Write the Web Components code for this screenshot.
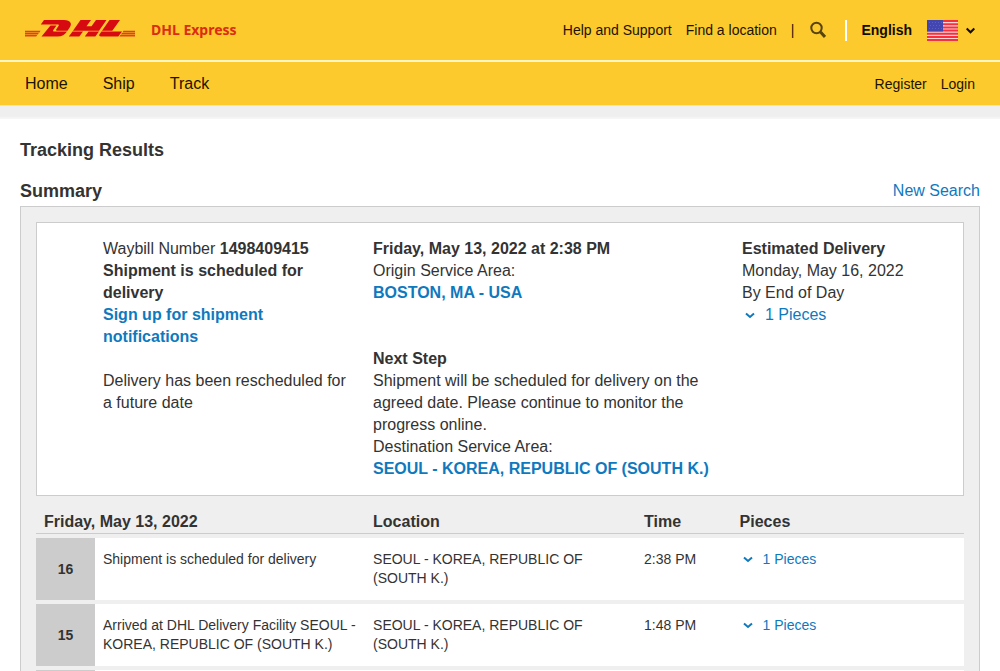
<!DOCTYPE html>
<html lang="en">
<head>
<meta charset="utf-8">
<meta name="viewport" content="width=device-width, initial-scale=1">
<title>Tracking Results</title>
<style>
  body { margin: 0; background: #fff; color: #333; font: 16px/22px "Liberation Sans", Arial, sans-serif; }
</style>
</head>
<body>
<site-header></site-header>
<tracking-page>
  <shipment-summary slot="summary"></shipment-summary>
  <event-table slot="events"></event-table>
</tracking-page>

<template id="site-header">
  <style>
    :host { display: block; color: #1c1300; }
    a { color: inherit; text-decoration: none; }
    header, nav { display: flex; align-items: center; background: #fdca2e; padding: 0 25px; }
    header { height: 60px; border-bottom: 2px solid #fff6c4; font-size: 14px; }
    nav { height: 43px; gap: 35px; }
    .brand { display: flex; align-items: center; gap: 16px; color: #dc2c12; margin-right: auto; font: 700 14px/20px "Noto Sans", sans-serif; }
    .brand svg, .search svg { display: block; }
    .tools { display: flex; align-items: center; gap: 14px; }
    .search { border: 0; padding: 0; margin-left: 2px; background: none; color: #56430d; }
    .rule { width: 2px; height: 21px; background: #fff; margin: 0 0 0 5px; }
    .language { display: flex; align-items: center; border: 0; padding: 0; background: none; color: #120c00; font: 700 14px/20px "Liberation Sans", Arial, sans-serif; }
    .flag { margin: 0 8px 0 15px; }
    .account { display: flex; gap: 14px; margin-left: auto; font-size: 14px; }
    .shade { height: 13px; background: linear-gradient(#efefef 10px, #f8f8f8); border-top: 1px solid #f4e4b0; }
  </style>
  <header>
    <a class="brand" href="#">
      <svg width="110" height="22" viewBox="0 0 110 22" fill="#d80a11" role="img" aria-label="DHL">
        <path fill="#e0431a" d="M0 11.800h15.500l-1 1.600H0zM0 14h13.800l-1 1.500H0zM0 16.100h12.200l-1 1.500H0zM98.500 11.800H110v1.600H97.400zM97 14h13v1.500H95.900zM95.400 16.100H110v1.500H94.300z"/>
        <path d="M19 1H39C46 1 47 5 45 8L42.500 11.800H32.500C31 11.800 30.800 11 31.300 10.200L33.500 7C34 6.200 33.800 5.500 33 5.500H15.800z"/>
        <path d="M25.500 6.500H31.500L28.300 11C27.600 12 28.300 12.500 29.800 12.500H42C40 15.500 37 17.600 32.500 17.600H16.500z"/>
        <path d="M55.500 1H66L61.500 7.300H66.500L71 1H81.500L74 11.800H48zM47.500 12.500H58L54.300 17.600H43.800zM63.500 12.500H74L70.300 17.600H59.800z"/>
        <path d="M84.500 1H95L87.300 11.800H77zM76.500 12.500H97L93.300 17.600H77C73.500 17.600 74 15.800 75 14.500z"/>
      </svg>
      <span>DHL Express</span>
    </a>
    <div class="tools">
      <a href="#">Help and Support</a>
      <a href="#">Find a location</a>
      <span>|</span>
      <button class="search" aria-label="Search">
        <svg width="16" height="18" viewBox="0 0 16 18" fill="none" stroke="currentColor"><circle cx="6.500" cy="7" r="5.200" stroke-width="2"/><path d="M10.500 11L15 16" stroke-width="3"/></svg>
      </button>
      <span class="rule"></span>
      <button class="language">English
        <svg class="flag" width="31" height="21" viewBox="0 0 31 21" role="img" aria-label="United States">
          <path fill="#fbd3d3" d="M0 0h31v21H0z"/>
          <path stroke="#f72f3f" stroke-width="2" d="M0 1h31M0 4.200h31M0 7.400h31M0 10.600h31M0 13.800h31M0 17h31M0 20h31"/>
          <path fill="#4346b0" d="M0 0h16v11.500H0z"/>
          <path stroke="#5c5ec0" stroke-dasharray="1 2" d="M2 2.500h13M3 5.500h12M2 8.500h13"/>
        </svg>
        <svg width="9" height="7" viewBox="0 0 9 7" fill="none" stroke="currentColor" stroke-width="2"><path d="M.7 1.500L4.500 5.300L8.300 1.500"/></svg>
      </button>
    </div>
  </header>
  <nav>
    <a href="#">Home</a><a href="#">Ship</a><a href="#">Track</a>
    <div class="account"><a href="#">Register</a><a href="#">Login</a></div>
  </nav>
  <div class="shade"></div>
</template>

<template id="tracking-page">
  <style>
    :host { display: block; padding: 20px 20px 0; }
    h1, h2 { margin: 0; font-size: 18px; line-height: 22px; }
    .heading { display: flex; justify-content: space-between; align-items: center; margin: 19px 0 4px; }
    a { color: #0f79be; text-decoration: none; }
    .panel { border: 1px solid #ccc; background: #efefef; padding: 15px; }
  </style>
  <h1>Tracking Results</h1>
  <div class="heading"><h2>Summary</h2><a href="#">New Search</a></div>
  <section class="panel"><slot name="summary"></slot><slot name="events"></slot></section>
</template>

<template id="pieces-toggle">
  <style>
    :host { display: block; }
    button { display: flex; align-items: center; gap: 10px; border: 0; padding: 0 0 0 3px; background: none; color: #0f79be; font: inherit; }
  </style>
  <button><svg width="10" height="7" viewBox="0 0 10 7" fill="none" stroke="currentColor" stroke-width="2"><path d="M1 1.500L5 5L9 1.500"/></svg><span><slot></slot></span></button>
</template>

<template id="shipment-summary">
  <style>
    :host { display: grid; grid-template-columns: 270fr 369fr 221fr; background: #fff; border: 1px solid #ccc; padding: 15px 0 15px 66px; }
    p { margin: 0; }
    .waybill { padding-right: 14px; }
    .note { margin-top: 22px; }
    .next { margin-top: 44px; padding-right: 20px; }
    a { color: #0f79be; text-decoration: none; font-weight: 700; }
  </style>
  <div class="waybill">
    <p>Waybill Number <b>1498409415</b></p>
    <p><b>Shipment is scheduled for delivery</b></p>
    <p><a href="#">Sign up for shipment notifications</a></p>
    <p class="note">Delivery has been rescheduled for a future date</p>
  </div>
  <div>
    <p><b>Friday, May 13, 2022 at 2:38 PM</b></p>
    <p>Origin Service Area:</p>
    <p><a href="#">BOSTON, MA - USA</a></p>
    <div class="next">
      <p><b>Next Step</b></p>
      <p>Shipment will be scheduled for delivery on the agreed date. Please continue to monitor the progress online.</p>
      <p>Destination Service Area:</p>
      <p><a href="#">SEOUL - KOREA, REPUBLIC OF (SOUTH K.)</a></p>
    </div>
  </div>
  <div>
    <p><b>Estimated Delivery</b></p>
    <p>Monday, May 16, 2022</p>
    <p>By End of Day</p>
    <pieces-toggle>1 Pieces</pieces-toggle>
  </div>
</template>

<template id="event-table">
  <style>
    :host { display: block; }
    table { width: 100%; table-layout: fixed; border-spacing: 0; font-size: 14px; line-height: 19px; }
    .number { width: 59px; }
    .event { width: 29.1%; }
    .place { width: 29.2%; }
    .time { width: 10.3%; }
    th, td { padding: 12px 8px; text-align: left; vertical-align: top; }
    thead th { padding: 16px 8px 1px; border-bottom: 1px solid #ccc; font-size: 16px; line-height: 20px; }
    tbody th, td { border-top: 4px solid #efefef; background: #fff; background-clip: padding-box; }
    tbody th { background-color: #ccc; text-align: center; vertical-align: middle; }
  </style>
  <table>
    <colgroup><col class="number"><col class="event"><col class="place"><col class="time"><col></colgroup>
    <thead>
      <tr><th colspan="2" scope="col">Friday, May 13, 2022</th><th scope="col">Location</th><th scope="col">Time</th><th scope="col">Pieces</th></tr>
    </thead>
    <tbody>
      <tr><th scope="row">16</th><td>Shipment is scheduled for delivery</td><td>SEOUL - KOREA, REPUBLIC OF (SOUTH K.)</td><td>2:38 PM</td><td><pieces-toggle>1 Pieces</pieces-toggle></td></tr>
      <tr><th scope="row">15</th><td>Arrived at DHL Delivery Facility SEOUL - KOREA, REPUBLIC OF (SOUTH K.)</td><td>SEOUL - KOREA, REPUBLIC OF (SOUTH K.)</td><td>1:48 PM</td><td><pieces-toggle>1 Pieces</pieces-toggle></td></tr>
      <tr><th scope="row"></th><td></td><td></td><td></td><td></td></tr>
    </tbody>
  </table>
</template>

<script>
  class TemplateElement extends HTMLElement {
    constructor() {
      super();
      const template = document.getElementById(this.localName);
      this.attachShadow({ mode: "open" }).append(template.content.cloneNode(true));
    }
  }
  customElements.define("pieces-toggle", class PiecesToggle extends TemplateElement {});
  customElements.define("site-header", class SiteHeader extends TemplateElement {});
  customElements.define("shipment-summary", class ShipmentSummary extends TemplateElement {});
  customElements.define("event-table", class EventTable extends TemplateElement {});
  customElements.define("tracking-page", class TrackingPage extends TemplateElement {});
</script>
</body>
</html>
